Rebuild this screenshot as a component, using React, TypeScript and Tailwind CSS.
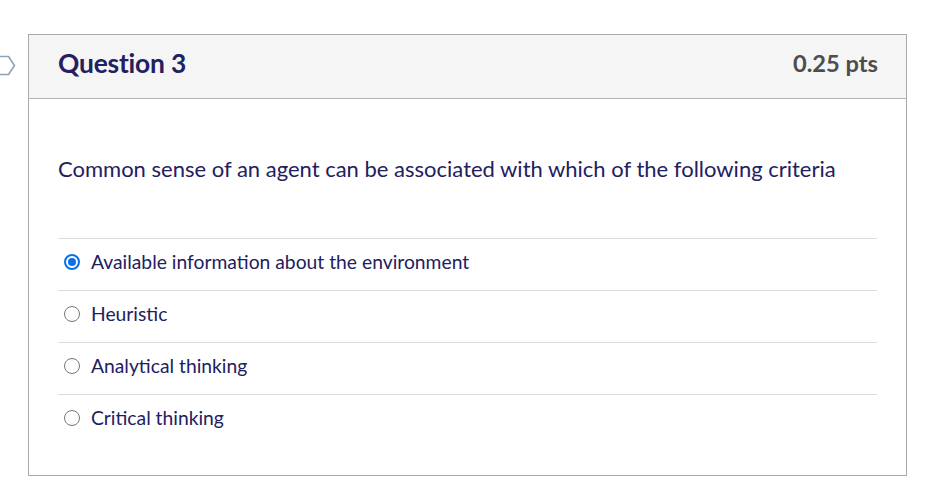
import React from "react";

const answers = [
  { label: "Available information about the environment", checked: true },
  { label: "Heuristic", checked: false },
  { label: "Analytical thinking", checked: false },
  { label: "Critical thinking", checked: false },
];

export default function App() {
  return (
    <div className="relative w-[941px] h-[498px] bg-white" style={{ fontFamily: "Lato, 'Open Sans', sans-serif" }}>
      <svg className="absolute left-0 top-[54px]" width="18" height="24" viewBox="0 0 18 24">
        <path d="M-2 2.5 H8.5 L14.5 11.5 L8.5 20.5 H-2 Z" fill="white" stroke="#8fa3b5" strokeWidth="1.6" strokeLinejoin="round" />
      </svg>
      <div className="absolute left-0 top-0 w-full h-full pt-[34px] pl-[28px]">
        <div className="w-[879px] h-[442px] border border-[#a9a9a9] flex flex-col">
          <div className="h-[64px] shrink-0 bg-[#f5f5f5] border-b border-[#b5b5b5] flex items-center justify-between pl-[29px] pr-[28px] pb-[5px]">
            <span className="text-[26.4px] font-bold text-[#22205f] tracking-[-0.2px]">Question 3</span>
            <span className="text-[23.7px] font-bold text-[#4d4d4d]">0.25 pts</span>
          </div>
          <div className="px-[29px] pt-[55px]">
            <p className="text-[22px] leading-[30px] text-[#22205f]">
              Common sense of an agent can be associated with which of the following criteria
            </p>
            <div className="mt-[54px]">
              {answers.map((a, i) => (
                <div
                  key={i}
                  className="h-[52px] border-t border-[#dcdcdc] flex items-center pl-[6px] pb-[5px]"
                >
                  {a.checked ? (
                    <span className="w-[16px] h-[16px] rounded-full border-[2px] border-[#0b6fe8] bg-white flex items-center justify-center">
                      <span className="w-[8px] h-[8px] rounded-full bg-[#0b6fe8]" />
                    </span>
                  ) : (
                    <span className="w-[16px] h-[16px] rounded-full border border-[#767676] bg-white" />
                  )}
                  <span className="ml-[11px] text-[19.3px] text-[#22205f]">{a.label}</span>
                </div>
              ))}
            </div>
          </div>
        </div>
      </div>
    </div>
  );
}
